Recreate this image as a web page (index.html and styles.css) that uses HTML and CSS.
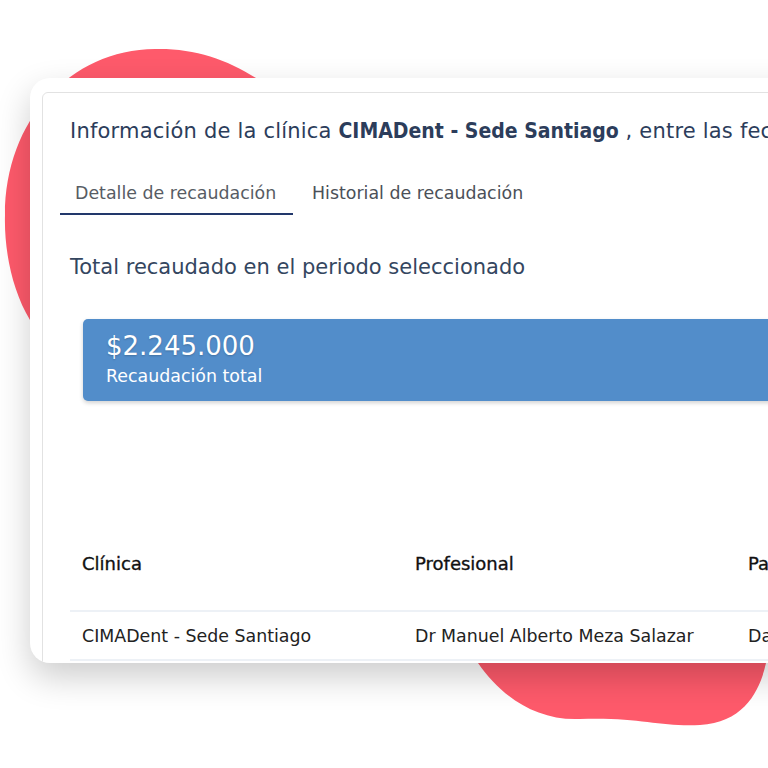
FILE: index.html
```html
<!DOCTYPE html>
<html lang="es">
<head>
<meta charset="utf-8">
<title>Recaudación</title>
<link rel="stylesheet" href="styles.css">
</head>
<body>
<div class="stage">
  <svg class="blobs" width="768" height="768" viewBox="0 0 768 768" aria-hidden="true">
    <path class="blob" d="M155 49 C195 48 230 60 262 82 L262 320 L30 320 C12 290 4 250 5 215 C5 120 70 50 155 49 Z"/>
    <path class="blob" d="M470 640 L775 640 L766 663 C760 690 745 722 700 725 C660 727 640 717 580 719 C535 721 500 695 478 663 Z"/>
  </svg>
  <div class="frame">
    <div class="panel">
      <h1 class="title">Información de la clínica <strong>CIMADent - Sede Santiago</strong> , entre las fechas 01/03/2023 y 31/03/2023</h1>
      <div class="tabs">
        <div class="tab active">Detalle de recaudación</div>
        <div class="tab">Historial de recaudación</div>
      </div>
      <h2 class="section">Total recaudado en el periodo seleccionado</h2>
      <div class="total">
        <div class="amount">$2.245.000</div>
        <div class="label">Recaudación total</div>
      </div>
      <div class="grid">
        <div class="row head">
          <div class="cell">Clínica</div>
          <div class="cell">Profesional</div>
          <div class="cell">Paciente</div>
        </div>
        <div class="row">
          <div class="cell">CIMADent - Sede Santiago</div>
          <div class="cell">Dr Manuel Alberto Meza Salazar</div>
          <div class="cell">Daniela Rojas</div>
        </div>
        <div class="row">
          <div class="cell">CIMADent - Sede Santiago</div>
          <div class="cell">Dr Manuel Alberto Meza Salazar</div>
          <div class="cell">Daniela Rojas</div>
        </div>
      </div>
    </div>
  </div>
</div>
</body>
</html>
```

FILE: styles.css
```css
html, body {
  margin: 0;
  padding: 0;
  background: #ffffff;
}
body {
  width: 768px;
  height: 768px;
  overflow: hidden;
  font-family: "DejaVu Sans", "Liberation Sans", sans-serif;
}
.stage {
  position: relative;
  width: 768px;
  height: 768px;
  overflow: hidden;
  padding-top: 78px;
  box-sizing: border-box;
}
.blobs {
  position: absolute;
  left: 0;
  top: 0;
}
.blob {
  fill: #fe5a6b;
}
.frame {
  position: relative;
  margin-left: 30px;
  width: 790px;
  height: 585px;
  background: #ffffff;
  border-radius: 20px;
  box-shadow: 0 14px 34px rgba(0, 0, 0, 0.20);
  overflow: hidden;
  padding: 14px 0 0 12px;
  box-sizing: border-box;
}
.panel {
  border: 1px solid #e2e2e2;
  border-radius: 6px;
  width: 1100px;
  height: 700px;
  box-sizing: border-box;
}
.title {
  margin: 0;
  padding: 23px 0 0 27px;
  font-size: 21px;
  line-height: 30px;
  font-weight: 400;
  color: #2c3d5b;
  white-space: nowrap;
  letter-spacing: 0.2px;
}
.title strong {
  font-family: "DejaVu Sans Condensed", "DejaVu Sans", sans-serif;
  font-weight: 700;
  letter-spacing: 0;
}
.tabs {
  display: flex;
  margin: 35px 0 0 17px;
}
.tab {
  padding: 0 15px 8px 19px;
  font-size: 17.4px;
  line-height: 24px;
  color: #4b5058;
  white-space: nowrap;
}
.tab.active {
  width: 203px;
  padding-left: 15px;
  border-bottom: 2px solid #22386b;
  color: #575c64;
}
.section {
  margin: 37px 0 0 27px;
  font-size: 21px;
  line-height: 30px;
  font-weight: 400;
  color: #34465f;
  white-space: nowrap;
}
.total {
  margin: 37px 0 0 40px;
  height: 82px;
  background: #528dca;
  border-radius: 5px;
  box-shadow: 0 2px 4px rgba(0, 0, 0, 0.18);
  color: #ffffff;
  padding: 11px 0 0 23px;
  box-sizing: border-box;
}
.amount {
  font-size: 26px;
  line-height: 32px;
  text-shadow: 0 1px 2px rgba(0, 0, 0, 0.2);
}
.label {
  font-size: 17.4px;
  line-height: 22px;
  margin-top: 3px;
}
.grid {
  margin: 131px 0 0 27px;
  color: #222222;
}
.row {
  display: flex;
  border-bottom: 2px solid #edf1f6;
  padding: 12px 0 11px 0;
}
.row.head {
  padding: 20px 0 34px 0;
}
.cell {
  flex: none;
  width: 309px;
  padding: 0 12px;
  font-size: 17.4px;
  line-height: 24px;
  white-space: nowrap;
}
.row.head .cell {
  font-size: 18px;
  color: #111111;
  -webkit-text-stroke: 0.35px #111111;
}
```
